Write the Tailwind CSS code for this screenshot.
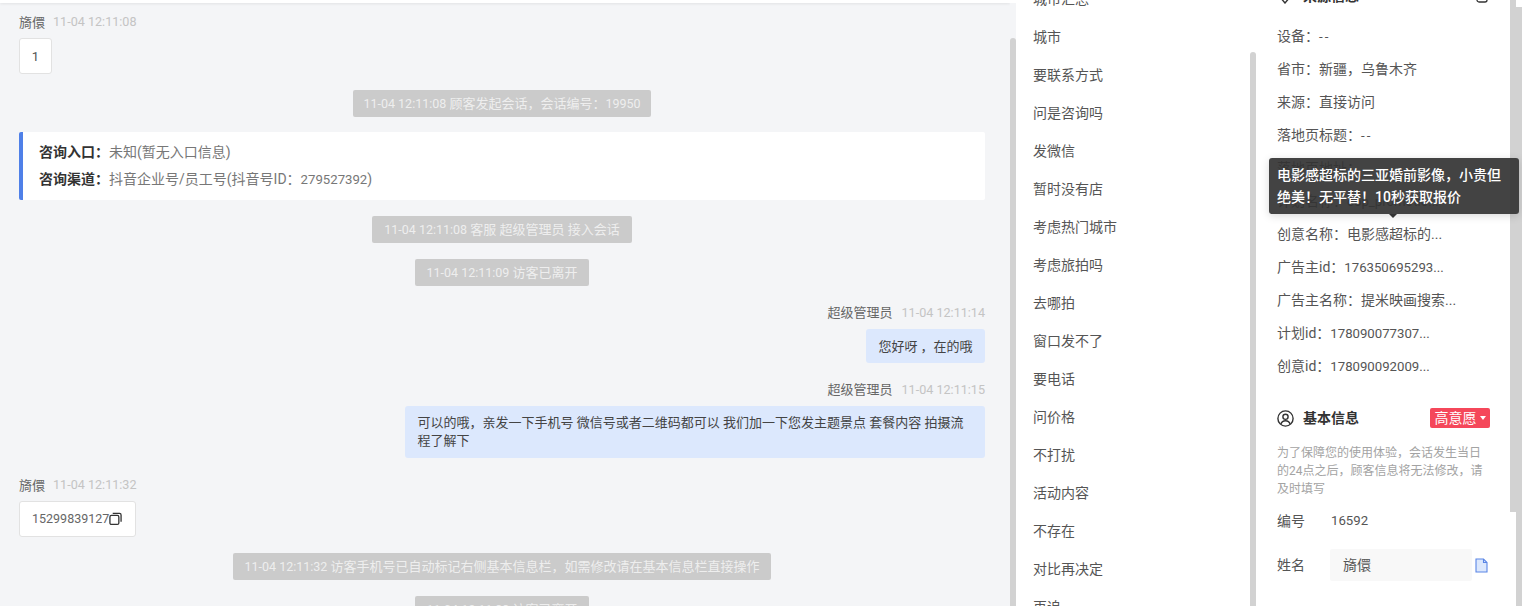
<!DOCTYPE html>
<html lang="zh-CN">
  <head>
    <meta charset="UTF-8" />
    <title>会话详情</title>
    <script src="https://cdn.jsdelivr.net/npm/@tailwindcss/browser@4"></script>
  </head>
  <body class="bg-white">
    <div class="flex h-[606px] w-[1522px] overflow-hidden font-['Roboto','Noto_Sans_CJK_SC',sans-serif] text-[13px] text-[#555]">
      <!-- chat -->
      <main class="relative w-[1010px] shrink-0 overflow-hidden bg-[#f4f5f7] px-[19px] pr-[25px]">
        <div class="absolute inset-x-0 top-0 h-[3px] bg-white shadow-[0_1px_3px_rgba(0,0,0,0.08)]"></div>
        <div class="mt-[12px] flex h-[20px] items-center gap-[8px] pt-[1px]"><span class="text-[#666]">旖儇</span><span class="text-[12.6px] text-[#c4c4c4]">11-04 12:11:08</span></div>
        <div class="mt-[6px] flex h-[36px] w-[33px] items-center justify-center rounded-[3px] border border-[#e2e2e2] bg-white pt-[1px]">1</div>

        <div class="mt-[16px] flex justify-center"><div class="flex h-[27px] w-[298px] items-center justify-center rounded-[2px] bg-[#cbcbcb] pt-[1px] text-white/70"><span class="text-[12.5px]">11-04 12:11:08&nbsp;</span>顾客发起会话，会话编号：<span class="text-[12.5px]">19950</span></div></div>

        <div class="mt-[15px] flex h-[68px] flex-col justify-center gap-[7px] rounded-[2px] border-l-4 border-[#4f80e8] bg-white pb-[2px] pl-[16px] text-[14px]">
          <div class="h-[20px] leading-[20px]"><b class="font-bold text-[#333]">咨询入口：</b><span class="text-[#777]">未知(暂无入口信息)</span></div>
          <div class="h-[20px] leading-[20px]"><b class="font-bold text-[#333]">咨询渠道：</b><span class="text-[#777]">抖音企业号/员工号(抖音号ID：<span class="text-[13.2px]">279527392</span>)</span></div>
        </div>

        <div class="mt-[16px] flex justify-center"><div class="flex h-[27px] w-[260px] items-center justify-center rounded-[2px] bg-[#cbcbcb] pt-[1px] text-white/70"><span class="text-[12.5px]">11-04 12:11:08&nbsp;</span>客服 超级管理员 接入会话</div></div>
        <div class="mt-[16px] flex justify-center"><div class="flex h-[27px] w-[174px] items-center justify-center rounded-[2px] bg-[#cbcbcb] pt-[1px] text-white/70"><span class="text-[12.5px]">11-04 12:11:09&nbsp;</span>访客已离开</div></div>

        <div class="mt-[17px] flex h-[20px] items-center justify-end gap-[9px]"><span class="text-[#666]">超级管理员</span><span class="text-[12.6px] text-[#c4c4c4]">11-04 12:11:14</span></div>
        <div class="mt-[6px] flex justify-end"><div class="flex h-[34px] w-[119px] items-center justify-center rounded-[3px] bg-[#dce8fd] pt-[1px] text-[#444]">您好呀 ，在的哦</div></div>

        <div class="mt-[17px] flex h-[20px] items-center justify-end gap-[9px]"><span class="text-[#666]">超级管理员</span><span class="text-[12.6px] text-[#c4c4c4]">11-04 12:11:15</span></div>
        <div class="mt-[6px] flex justify-end"><div class="h-[52px] w-[580px] rounded-[3px] bg-[#dce8fd] px-[12.5px] py-[8px] leading-[18px] text-[#444]">可以的哦，亲发一下手机号 微信号或者二维码都可以 我们加一下您发主题景点 套餐内容 拍摄流程了解下</div></div>

        <div class="mt-[17px] flex h-[20px] items-center gap-[8px] pt-[1px]"><span class="text-[#666]">旖儇</span><span class="text-[12.6px] text-[#c4c4c4]">11-04 12:11:32</span></div>
        <div class="mt-[6px] flex h-[36px] w-[117px] items-center rounded-[3px] border border-[#e2e2e2] bg-white pl-[12px]">
          <span class="text-[12.5px] text-[#666]">15299839127</span>
          <svg class="h-[14px] w-[13px] text-[#333]" viewBox="0 0 14 14" fill="none" stroke="currentColor" stroke-width="1.4"><rect x="1" y="3.2" width="9.600" height="9.600" rx="1.600"/><path d="M4 1h7.400A1.600 1.600 0 0 1 13 2.600V10"/></svg>
        </div>

        <div class="mt-[16px] flex justify-center"><div class="flex h-[27px] w-[538px] items-center justify-center rounded-[2px] bg-[#cbcbcb] pt-[1px] text-white/70"><span class="text-[12.5px]">11-04 12:11:32&nbsp;</span>访客手机号已自动标记右侧基本信息栏，如需修改请在基本信息栏直接操作</div></div>
        <div class="mt-[16px] flex justify-center"><div class="flex h-[27px] w-[174px] items-center justify-center rounded-[2px] bg-[#cbcbcb] pt-[1px] text-white/70"><span class="text-[12.5px]">11-04 12:11:33&nbsp;</span>访客已离开</div></div>
      </main>

      <!-- chat scrollbar -->
      <div class="w-[6px] shrink-0 border-t-[3px] border-white bg-[#f4f5f7] pt-[35px]"><div class="h-full rounded-t-[3px] bg-[#d2d2d2]"></div></div>

      <!-- quick replies -->
      <section class="w-[234px] shrink-0 overflow-hidden bg-white pl-[17px] text-[14px] text-[#555]">
        <div class="-mt-[20px]">
          <div class="flex h-[38px] items-center">城市汇总</div>
          <div class="flex h-[38px] items-center">城市</div>
          <div class="flex h-[38px] items-center">要联系方式</div>
          <div class="flex h-[38px] items-center">问是咨询吗</div>
          <div class="flex h-[38px] items-center">发微信</div>
          <div class="flex h-[38px] items-center">暂时没有店</div>
          <div class="flex h-[38px] items-center">考虑热门城市</div>
          <div class="flex h-[38px] items-center">考虑旅拍吗</div>
          <div class="flex h-[38px] items-center">去哪拍</div>
          <div class="flex h-[38px] items-center">窗口发不了</div>
          <div class="flex h-[38px] items-center">要电话</div>
          <div class="flex h-[38px] items-center">问价格</div>
          <div class="flex h-[38px] items-center">不打扰</div>
          <div class="flex h-[38px] items-center">活动内容</div>
          <div class="flex h-[38px] items-center">不存在</div>
          <div class="flex h-[38px] items-center">对比再决定</div>
          <div class="flex h-[38px] items-center">再追</div>
        </div>
      </section>

      <!-- quick replies scrollbar -->
      <div class="w-[6px] shrink-0 bg-white pt-[52px]"><div class="h-full rounded-t-[3px] bg-[#d2d2d2]"></div></div>

      <!-- visitor info -->
      <aside class="relative w-[254px] shrink-0 bg-white pl-[21px] pr-[20px] text-[14px]">
        <div class="-mt-[14px] flex h-[20px] items-center justify-between pr-[2px]">
          <div class="flex items-center gap-[10px] font-bold text-[#333]">
            <svg class="h-[16px] w-[16px]" viewBox="0 0 16 16" fill="none" stroke="#333" stroke-width="1.4"><path d="M8 15 2.500 8.500A5.600 5.600 0 1 1 13.500 8.500Z"/></svg>
            来源信息
          </div>
          <svg class="h-[14px] w-[12px]" viewBox="0 0 12 14" fill="none" stroke="#333" stroke-width="1.3"><rect x="1" y="1" width="10" height="12" rx="2"/></svg>
        </div>
        <div class="mt-[14px]">
          <div class="flex h-[33px] items-center">设备：<span class="text-[13.2px] tracking-[2px]">--</span></div>
          <div class="flex h-[33px] items-center">省市：新疆，乌鲁木齐</div>
          <div class="flex h-[33px] items-center">来源：直接访问</div>
          <div class="flex h-[33px] items-center">落地页标题：<span class="text-[13.2px] tracking-[2px]">--</span></div>
          <div class="flex h-[33px] items-center">落地页地址：</div>
          <div class="flex h-[33px] items-center">计划名称：<span class="text-[13.2px]">cop_promotio...</span></div>
          <div class="flex h-[33px] items-center">创意名称：电影感超标的...</div>
          <div class="flex h-[33px] items-center">广告主id：<span class="text-[13.2px]">176350695293...</span></div>
          <div class="flex h-[33px] items-center">广告主名称：提米映画搜索...</div>
          <div class="flex h-[33px] items-center">计划id：<span class="text-[13.2px]">178090077307...</span></div>
          <div class="flex h-[33px] items-center">创意id：<span class="text-[13.2px]">178090092009...</span></div>
        </div>

        <div class="mt-[25px] flex h-[20px] items-center justify-between">
          <div class="flex items-center gap-[9px] font-bold text-[#333]">
            <svg class="h-[17px] w-[17px]" viewBox="0 0 17 17" fill="none" stroke="#333" stroke-width="1.4"><circle cx="8.500" cy="8.500" r="7.600"/><circle cx="8.500" cy="6.800" r="2.600"/><path d="M3.800 14.200c.8-2.400 2.600-3.400 4.700-3.400s3.900 1 4.700 3.400"/></svg>
            基本信息
          </div>
          <div class="flex h-[20px] w-[60px] items-center justify-center gap-[3px] rounded-[2px] bg-[#f5475a] text-white">高意愿<span class="h-0 w-0 border-x-[3.500px] border-t-[4px] border-x-transparent border-t-white"></span></div>
        </div>
        <p class="mt-[16px] text-[12px] leading-[18px] text-[#a3a3a3]">为了保障您的使用体验，会话发生当日的24点之后，顾客信息将无法修改，请及时填写</p>
        <div class="mt-[13px] flex h-[20px] items-center"><span class="w-[54px]">编号</span><span class="text-[13.2px]">16592</span></div>
        <div class="mt-[18px] flex h-[32px] items-center">
          <span class="w-[53px]">姓名</span>
          <div class="flex h-[32px] w-[142px] items-center rounded-[2px] bg-[#f8f8f8] pl-[13px]">旖儇</div>
          <svg class="ml-[3px] h-[15px] w-[13px]" viewBox="0 0 13 15" fill="#dce8fd" stroke="#5b86e5" stroke-width="1.100"><path d="M1 1h7.500L12 4.500V14H1Z"/><path d="M8.500 1v3.500H12" fill="none"/></svg>
        </div>

        <!-- tooltip -->
        <div class="absolute left-[13px] top-[158px] w-[250px] rounded-[3px] bg-[#333]/92 px-[8px] py-[6px] text-[14px] leading-[22px] font-medium text-white shadow-[0_2px_8px_rgba(0,0,0,0.15)]">
          电影感超标的三亚婚前影像，小贵但绝美！无平替！10秒获取报价
          <span class="absolute left-[120px] top-full h-0 w-0 border-x-[4px] border-t-[4px] border-x-transparent border-t-[#333]"></span>
        </div>
      </aside>

      <!-- right scrollbars -->
      <div class="flex w-[6px] shrink-0 flex-col bg-white"><div class="h-[512px] bg-[#d2d2d2]"></div></div>
      <div class="w-[6px] shrink-0 bg-white pt-[7px]"><div class="h-full bg-[#d2d2d2]"></div></div>
    </div>
  </body>
</html>
